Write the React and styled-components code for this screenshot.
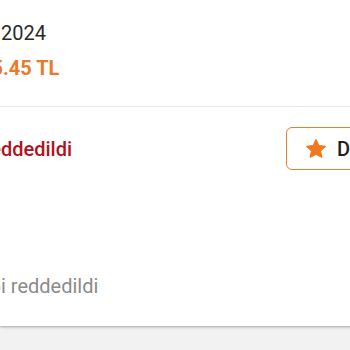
import React from "react";
import styled, { createGlobalStyle } from "styled-components";

const Global = createGlobalStyle`
  html, body { margin: 0; padding: 0; }
  body {
    background: #f2f2f2;
    font-family: Roboto, "Liberation Sans", sans-serif;
    overflow: hidden;
    width: 350px;
    height: 350px;
  }
`;

const Card = styled.div`
  width: 460px;
  height: 326px;
  background: #ffffff;
  box-shadow: 0 1px 2px rgba(0, 0, 0, 0.22), 0 2px 4px rgba(0, 0, 0, 0.08);
  display: flex;
  flex-direction: column;
  box-sizing: border-box;
`;

const Header = styled.div`
  padding: 21px 16px 26px 0;
  border-bottom: 1px solid #e6e6e6;
  display: flex;
  flex-direction: column;
  gap: 11px;
`;

const Line = styled.div`
  font-size: 20px;
  line-height: 24px;
  white-space: nowrap;
  color: ${(p) => p.$color || "#2a2a2a"};
  font-weight: ${(p) => p.$weight || 400};
  padding-left: ${(p) => p.$indent || 0}px;
`;

const Hidden = styled.span`
  display: inline-flex;
  width: 0;
  justify-content: flex-end;
  white-space: nowrap;
`;

const Row = styled.div`
  display: flex;
  align-items: center;
  justify-content: space-between;
  padding: 20px 16px 0 0;
`;

const RateButton = styled.div`
  width: 158px;
  height: 43px;
  box-sizing: border-box;
  border: 1.5px solid #e5802f;
  border-radius: 6px;
  display: flex;
  align-items: center;
  gap: 10px;
  padding-left: 18px;
  font-size: 20px;
  font-weight: 500;
  color: #222;
  white-space: nowrap;
  overflow: hidden;

  svg {
    flex-shrink: 0;
  }
`;

const Footer = styled.div`
  margin-top: auto;
  padding-bottom: 28px;
`;

const Star = () => (
  <svg width="22" height="21" viewBox="0 0 24 23" aria-hidden="true">
    <path
      d="M12 1.6l3.1 6.6 7.2.9-5.3 5 1.4 7.1L12 17.7l-6.4 3.5 1.4-7.1-5.3-5 7.2-.9z"
      fill="#ef7a1e"
      stroke="#ef7a1e"
      strokeWidth="1.2"
      strokeLinejoin="round"
    />
  </svg>
);

export default function App() {
  return (
    <>
      <Global />
      <Card>
        <Header>
          <Line $indent={1}>
            <Hidden>Tarih: 12.03.</Hidden>2024
          </Line>
          <Line $indent={3} $color="#e97a2c" $weight={700}>
            <Hidden>Tutar: 1.245</Hidden>.45 TL
          </Line>
        </Header>
        <Row>
          <Line $indent={1} $color="#b0121a" $weight={500}>
            <Hidden>Re</Hidden>ddedildi
          </Line>
          <RateButton>
            <Star />
            Değerlendir
          </RateButton>
        </Row>
        <Footer>
          <Line $indent={1} $color="#8b8b8b">
            <Hidden>İade taleb</Hidden>i reddedildi
          </Line>
        </Footer>
      </Card>
    </>
  );
}
